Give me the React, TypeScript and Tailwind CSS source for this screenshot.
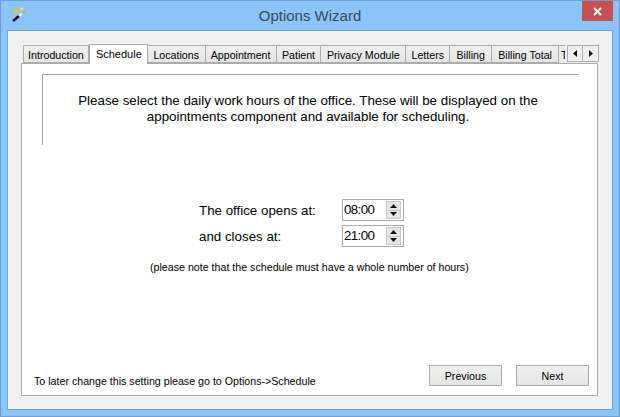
import React from 'react';

const tabs = [
  { name: 'Introduction', w: 'w-[66px]' },
  { name: 'Schedule', w: 'w-[59px]', active: true },
  { name: 'Locations', w: 'w-[58px]' },
  { name: 'Appointment', w: 'w-[71px]' },
  { name: 'Patient', w: 'w-[45px]' },
  { name: 'Privacy Module', w: 'w-[85px]' },
  { name: 'Letters', w: 'w-[44px]' },
  { name: 'Billing', w: 'w-[42px]' },
  { name: 'Billing Total', w: 'w-[67px]' },
];

function Wand() {
  return (
    <svg width="16" height="16" viewBox="0 0 16 16">
      <path d="M2 14 L8 9" stroke="#111" strokeWidth="2.4" />
      <path d="M8 9 L11 6.5" stroke="#eee" strokeWidth="2.4" />
      <rect x="3" y="2" width="4" height="4" fill="#f5c518" />
      <rect x="9" y="0.5" width="3" height="3" fill="#f3d768" />
      <rect x="12" y="4" width="2" height="2" fill="#e8a917" />
    </svg>
  );
}

function TimeField({ value }: { value: string }) {
  return (
    <div className="w-[62px] h-[22px] border border-[#ababab] bg-white flex items-center justify-between pl-[1px] pr-[2px] text-[13.33px] tracking-[-0.6px] text-black">
      <span>{value}</span>
      <div className="flex flex-col w-[15px] h-[18px] border border-[#c8c8c8] bg-[#e6e6e6]">
        <div className="flex-1 flex items-center justify-center border-b border-[#c8c8c8]">
          <svg width="7" height="4" viewBox="0 0 7 4"><path d="M3.5 0 L7 4 L0 4 Z" fill="#111" /></svg>
        </div>
        <div className="flex-1 flex items-center justify-center">
          <svg width="7" height="4" viewBox="0 0 7 4"><path d="M0 0 L7 0 L3.5 4 Z" fill="#111" /></svg>
        </div>
      </div>
    </div>
  );
}

function WizardButton({ label }: { label: string }) {
  return (
    <button className="w-[73px] h-[21px] pt-[1px] border border-[#acacac] bg-gradient-to-b from-[#f0f0f0] to-[#e5e5e5] text-[10.67px] text-black">
      {label}
    </button>
  );
}

export default function App() {
  return (
    <div className="relative w-[620px] h-[417px] overflow-hidden flex flex-col border border-[#6f9fd0] bg-[#8ac4f8] font-['Liberation_Sans',Arial,sans-serif]">
      {/* Title bar */}
      <div className="relative h-[29px] shrink-0 flex items-center justify-center pt-[1px] text-[15px] text-[#3c4a57]">
        <div className="absolute left-[10px] top-[6px]"><Wand /></div>
        <span>Options Wizard</span>
        <div className="absolute right-[6px] top-0 w-[31px] h-[20px] bg-[#c75050] flex items-center justify-center">
          <svg width="9" height="9" viewBox="0 0 9 9"><path d="M1 1 L8 8 M8 1 L1 8" stroke="#fff" strokeWidth="2" /></svg>
        </div>
      </div>

      {/* Client area */}
      <div className="mx-[6px] h-[380px] border border-[#6fa5d8] bg-[#f0f0f0] px-[13px] pt-[12px]">
        {/* Tab strip */}
        <div className="relative z-10 flex items-end h-[20px] pl-[2px] text-[10.67px] text-black">
          {tabs.map((t) =>
            t.active ? (
              <div key={t.name} className={`${t.w} h-[20px] -mb-[1px] border border-b-0 border-[#acacac] bg-white pl-[1px] text-center text-[11px] leading-[18px]`}>
                {t.name}
              </div>
            ) : (
              <div key={t.name} className={`${t.w} h-[18px] border border-[#acacac] border-l-0 first:border-l bg-gradient-to-b from-[#f0f0f0] to-[#e5e5e5] text-center leading-[19px]`}>
                {t.name}
              </div>
            )
          )}
          <div className="w-[6px] h-[18px] overflow-hidden border-t border-[#acacac] bg-[#ececec] pl-[2px] leading-[19px]">T</div>
          <div className="flex ml-[2px] mb-[1px] h-[17px] self-end border border-[#acacac] bg-[#f0f0f0]">
            <div className="w-[15px] flex items-center justify-center border-r border-[#acacac]">
              <svg width="4" height="7" viewBox="0 0 4 7"><path d="M4 0 L4 7 L0 3.5 Z" fill="#111" /></svg>
            </div>
            <div className="w-[15px] flex items-center justify-center">
              <svg width="4" height="7" viewBox="0 0 4 7"><path d="M0 0 L0 7 L4 3.5 Z" fill="#111" /></svg>
            </div>
          </div>
        </div>

        {/* Tab page */}
        <div className="relative w-[577px] h-[333px] border border-[#acacac] bg-white pl-[20px] pt-[10px] text-black">
          {/* faint watermark over the page */}
          <div className="absolute left-[228px] top-[39px] text-[26px] leading-[32px] font-bold text-[#f4f4f4]">SOFTPEDIA</div>

          <div className="relative w-[536px] h-[71px] border-t border-l border-[#a0a0a0] pt-[18px] pr-[5px] text-center text-[13.33px] leading-[16px]">
            <p>Please select the daily work hours of the office. These will be displayed on the</p>
            <p>appointments component and available for scheduling.</p>
          </div>

          <div className="relative mt-[54px] ml-[157px] flex flex-col gap-[4px] text-[13.33px]">
            <div className="flex items-center">
              <span className="w-[143px] pt-[2px]">The office opens at:</span>
              <TimeField value="08:00" />
            </div>
            <div className="flex items-center">
              <span className="w-[143px] pt-[2px]">and closes at:</span>
              <TimeField value="21:00" />
            </div>
          </div>

          <p className="mt-[13px] ml-[108px] text-[10.67px] leading-[14px]">(please note that the schedule must have a whole number of hours)</p>

          <div className="mt-[91px] -ml-[8px] flex items-start justify-between pr-[8px]">
            <span className="mt-[8px] text-[10.67px]">To later change this setting please go to Options-&gt;Schedule</span>
            <div className="flex gap-[14px]">
              <WizardButton label="Previous" />
              <WizardButton label="Next" />
            </div>
          </div>
        </div>
      </div>
    </div>
  );
}
